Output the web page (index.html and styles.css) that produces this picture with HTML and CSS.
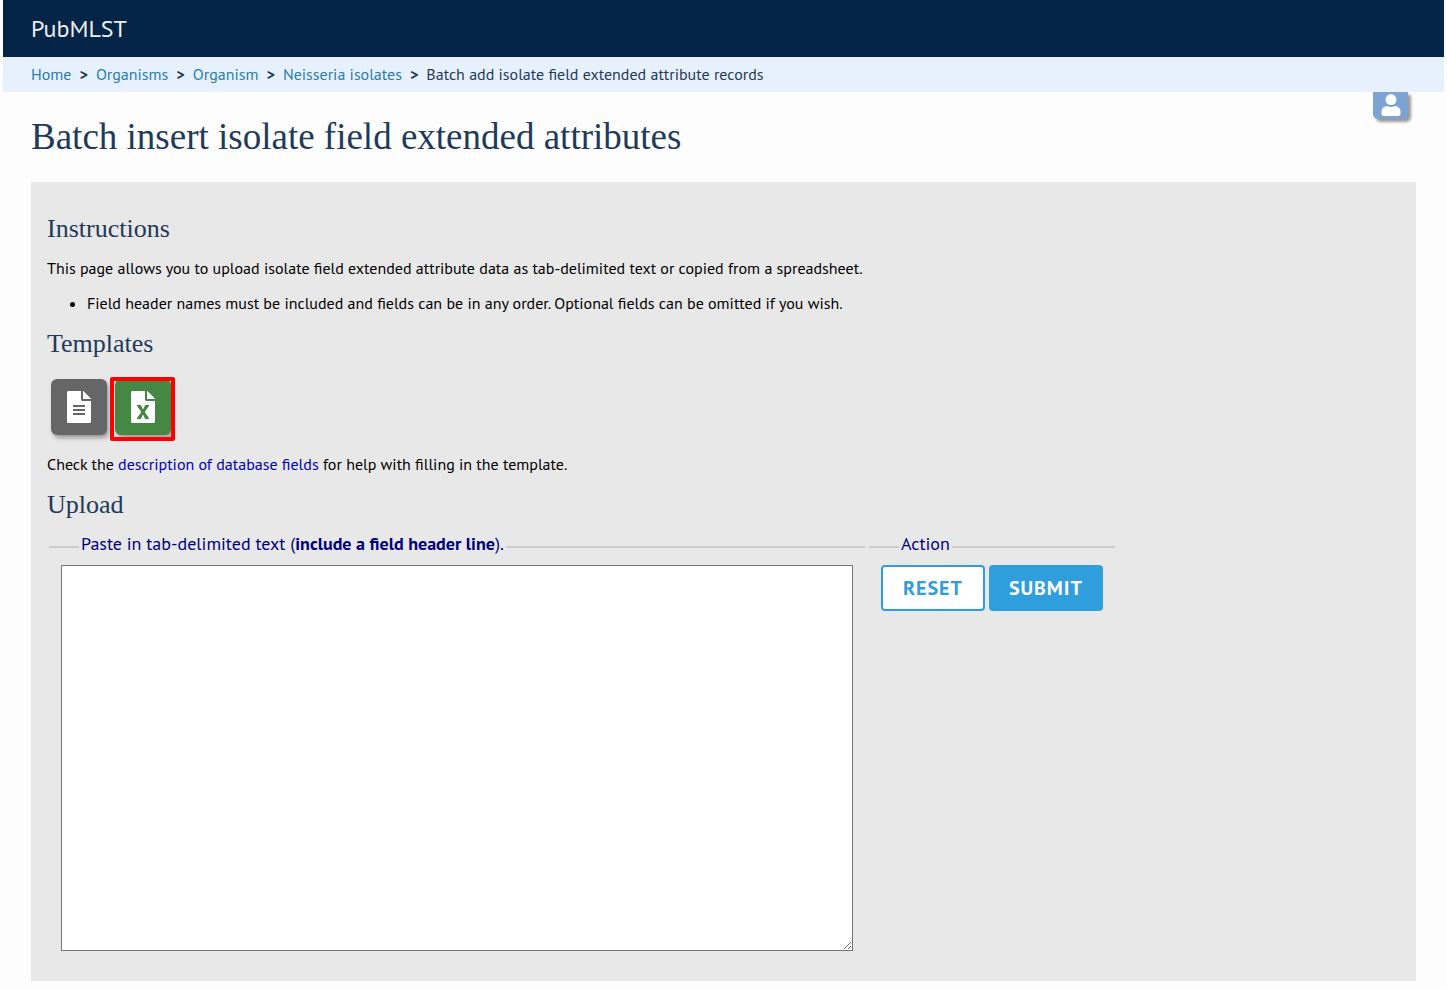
FILE: index.html
```
<!doctype html>
<html lang="en">
  <head>
    <meta charset="UTF-8" />
    <meta name="viewport" content="width=device-width, initial-scale=1.0" />
    <title>Batch insert isolate field extended attributes - PubMLST</title>
    <link rel="stylesheet" href="styles.css">
  </head>
  <body>
    <header>
      <div class="site-name">PubMLST</div>
      <nav class="breadcrumbs" aria-label="Breadcrumb">
        <a href="#">Home</a>
        <span class="separator">&gt;</span>
        <a href="#">Organisms</a>
        <span class="separator">&gt;</span>
        <a href="#">Organism</a>
        <span class="separator">&gt;</span>
        <a href="#">Neisseria isolates</a>
        <span class="separator">&gt;</span>
        <span>Batch add isolate field extended attribute records</span>
      </nav>
      <a class="user-tab" href="#" aria-label="Log in">
        <svg width="20" height="22" viewBox="0 0 20 22" fill="#fff">
          <circle cx="10" cy="5.6" r="5.5" />
          <path d="M5.8 12.2h.7c1 .5 2.200.8 3.500.8s2.500-.3 3.500-.8h.7c3 0 5.300 2.400 5.300 5.300v2.300c0 1.200-.9 2.100-2.100 2.100H2.600C1.400 21.900.5 21 .5 19.800v-2.300c0-2.900 2.400-5.300 5.300-5.300z" />
        </svg>
      </a>
    </header>

    <main>
      <h1>Batch insert isolate field extended attributes</h1>

      <div class="box">
        <h2>Instructions</h2>
        <p>This page allows you to upload isolate field extended attribute data as tab-delimited text or copied from a spreadsheet.</p>
        <ul>
          <li>Field header names must be included and fields can be in any order. Optional fields can be omitted if you wish.</li>
        </ul>

        <h2>Templates</h2>
        <div class="templates">
          <a class="template text-file" href="#" aria-label="Tab-delimited text header">
            <svg width="24" height="32" viewBox="0 0 24 32">
              <path fill="#fff" d="M1.500 0H14v8.500c0 .8.700 1.500 1.500 1.500H24v20.500c0 .8-.7 1.500-1.500 1.500h-21C.7 32 0 31.300 0 30.500v-29C0 .7.700 0 1.500 0zM16 0h.4l7.200 7.200c.3.300.4.500.4.800H16z" />
              <path stroke="#666" stroke-width="2" d="M6 15h12M6 19h12M6 23h12" />
            </svg>
          </a>
          <a class="template excel-file" href="#" aria-label="Excel template">
            <svg width="24" height="32" viewBox="0 0 24 32">
              <path fill="#fff" d="M1.500 0H14v8.500c0 .8.700 1.500 1.500 1.500H24v20.500c0 .8-.7 1.500-1.500 1.500h-21C.7 32 0 31.300 0 30.500v-29C0 .7.700 0 1.500 0zM16 0h.4l7.200 7.200c.3.300.4.500.4.800H16z" />
              <path fill="#484" d="M6.700 14h3.100l2.200 4.600 2.200-4.600h3.100c.6 0 .9.600.6 1.100L13.800 21l4.100 5.900c.3.500 0 1.100-.6 1.100h-3.100L12 23.500 9.800 28H6.700c-.6 0-.9-.6-.6-1.100l4.100-5.900-4.100-5.900c-.3-.5 0-1.100.6-1.100z" />
            </svg>
          </a>
        </div>
        <p>Check the <a href="#">description of database fields</a> for help with filling in the template.</p>

        <h2>Upload</h2>
        <form class="upload">
          <fieldset>
            <legend><label for="data">Paste in tab-delimited text (<strong>include a field header line</strong>).</label></legend>
            <textarea id="data" name="data"></textarea>
          </fieldset>
          <fieldset>
            <legend>Action</legend>
            <div class="actions">
              <button type="reset" class="reset">Reset</button>
              <button type="submit" class="submit">Submit</button>
            </div>
          </fieldset>
        </form>
      </div>
    </main>
  </body>
</html>
```
FILE: styles.css
```
* {
  box-sizing: border-box;
}

body {
  margin: 0 3px;
  background: #fdfdfd;
  color: #000;
  font-family: "PT Sans", "Noto Sans", sans-serif;
  font-size: 16px;
  line-height: 19px;
}

a {
  color: #00b;
  text-decoration: none;
}

header {
  position: relative;
}

.site-name {
  padding: 16px 28px;
  background: #042548;
  color: #eee;
  font-size: 24px;
  line-height: 25px;
}

.breadcrumbs {
  display: flex;
  flex-wrap: wrap;
  gap: 8px;
  padding: 8px 28px;
  background: #e7f1fe;
  color: #1f3a5a;
}

.breadcrumbs a {
  color: #2a7dae;
}

.separator {
  font-weight: bold;
}

.user-tab {
  position: absolute;
  top: 100%;
  right: 36px;
  display: flex;
  justify-content: center;
  width: 35px;
  height: 27px;
  padding-top: 2px;
  background: #7ca3d2;
  border-radius: 0 0 5px 5px;
  box-shadow: 3px 3px 3px #999;
}

main {
  padding: 24px 28px 8px;
}

h1,
h2 {
  color: #1f3a5a;
  font-family: "Liberation Serif", serif;
  font-weight: normal;
}

h1 {
  margin: 0 0 24px;
  font-size: 37px;
  line-height: 42px;
}

h2 {
  margin: 0 0 15px;
  font-size: 26px;
  line-height: 30px;
}

.box {
  padding: 32px 16px 30px;
  background: #e8e8e8;
}

p,
ul {
  margin: 0 0 16px;
}

ul {
  padding-left: 40px;
}

.templates {
  display: flex;
  gap: 8px;
  padding: 5px 4px 20px;
}

.template {
  display: flex;
  align-items: center;
  justify-content: center;
  width: 56px;
  height: 56px;
  border-radius: 6px;
  box-shadow: 2px 3px 4px #999;
}

.text-file {
  background: #666;
}

.excel-file {
  position: relative;
  background: #484;
}

/* highlight around the Excel template */
.excel-file::after {
  content: '';
  position: absolute;
  inset: -2px -4px -6px -5px;
  border: 4px solid #f00;
  border-radius: 2px;
}

.upload {
  display: flex;
  flex-wrap: wrap;
  align-items: flex-start;
  gap: 4px;
  padding: 0 2px;
}

fieldset {
  min-width: 0;
  margin: 0;
  padding: 6px 12px 0;
  border: 0;
  border-top: 2px solid #ccc;
}

legend {
  margin-left: 18px;
  padding: 0 2px 6px;
  color: #000080;
  font-size: 18px;
  line-height: 18px;
}

textarea {
  display: block;
  width: 792px;
  max-width: 100%;
  height: 386px;
  border: 1px solid #767676;
  background: #fff;
}

.actions {
  display: flex;
  gap: 4px;
}

button {
  height: 46px;
  padding: 0 20px;
  border: 0;
  border-radius: 4px;
  font-family: inherit;
  font-size: 20px;
  font-weight: bold;
  letter-spacing: 1px;
  text-transform: uppercase;
}

.reset {
  border: 2px solid #2f9edd;
  background: #fff;
  color: #2f9edd;
}

.submit {
  background: #2f9edd;
  color: #fff;
}
```
